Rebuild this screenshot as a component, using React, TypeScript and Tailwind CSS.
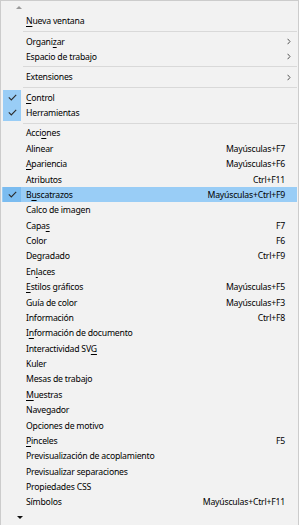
type Item =
  | 'sep'
  | {
      label: string;
      u?: number;
      shortcut?: string;
      sub?: boolean;
      checked?: boolean;
      active?: boolean;
    };

const items: Item[] = [
  { label: 'Nueva ventana', u: 0 },
  'sep',
  { label: 'Organizar', u: 6, sub: true },
  { label: 'Espacio de trabajo', sub: true },
  'sep',
  { label: 'Extensiones', sub: true },
  'sep',
  { label: 'Control', u: 0, checked: true },
  { label: 'Herramientas', checked: true },
  'sep',
  { label: 'Acciones', u: 4 },
  { label: 'Alinear', shortcut: 'Mayúsculas+F7' },
  { label: 'Apariencia', u: 0, shortcut: 'Mayúsculas+F6' },
  { label: 'Atributos', shortcut: 'Ctrl+F11' },
  { label: 'Buscatrazos', u: 1, shortcut: 'Mayúsculas+Ctrl+F9', checked: true, active: true },
  { label: 'Calco de imagen' },
  { label: 'Capas', u: 4, shortcut: 'F7' },
  { label: 'Color', shortcut: 'F6' },
  { label: 'Degradado', shortcut: 'Ctrl+F9' },
  { label: 'Enlaces', u: 2 },
  { label: 'Estilos gráficos', u: 0, shortcut: 'Mayúsculas+F5' },
  { label: 'Guía de color', shortcut: 'Mayúsculas+F3' },
  { label: 'Información', shortcut: 'Ctrl+F8' },
  { label: 'Información de documento', u: 1 },
  { label: 'Interactividad SVG', u: 17 },
  { label: 'Kuler' },
  { label: 'Mesas de trabajo' },
  { label: 'Muestras', u: 0 },
  { label: 'Navegador' },
  { label: 'Opciones de motivo' },
  { label: 'Pinceles', u: 0, shortcut: 'F5' },
  { label: 'Previsualización de acoplamiento' },
  { label: 'Previsualizar separaciones' },
  { label: 'Propiedades CSS' },
  { label: 'Símbolos', shortcut: 'Mayúsculas+Ctrl+F11' },
];

function Label({ text, u }: { text: string; u?: number }) {
  if (u === undefined) return <span>{text}</span>;
  return (
    <span>
      {text.slice(0, u)}
      <span className="underline underline-offset-[1.5px] decoration-[0.5px]">{text[u]}</span>
      {text.slice(u + 1)}
    </span>
  );
}

function Check() {
  return (
    <svg width="9" height="7" viewBox="0 0 9 7" fill="none">
      <path d="M0.8 3.4 L3.3 5.9 L8.2 0.9" stroke="#2b2b2b" strokeWidth="1.1" />
    </svg>
  );
}

function Chevron() {
  return (
    <svg width="4" height="7" viewBox="0 0 4 7" fill="none">
      <path d="M0.6 0.8 L3 3.5 L0.6 6.2" stroke="#555" strokeWidth="1" />
    </svg>
  );
}

export default function App() {
  return (
    <div
      className="w-[299px] h-[525px] overflow-hidden bg-[#f2f2f2] border border-b-0 border-[#cccccc] text-[8.7px] tracking-[-0.22px] text-black"
      style={{ fontFamily: '"Noto Sans", "Open Sans", sans-serif' }}
    >
      <div className="h-[12.3px] pl-[15px] pt-[5px]">
        <div className="w-0 h-0 border-l-[3px] border-r-[3px] border-b-[3px] border-l-transparent border-r-transparent border-b-[#9a9a9a]" />
      </div>
      {items.map((it, i) => {
        if (it === 'sep') {
          return (
            <div key={i} className="h-[5px] flex items-center pl-[22px] pr-[1px]">
              <div className="h-px w-full bg-[#d9d9d9]" />
            </div>
          );
        }
        return (
          <div
            key={i}
            className={
              'h-[15.375px] flex items-center pr-[12px] ml-[1px] mr-[1px] ' +
              (it.active ? 'bg-[#99cdf6]' : '')
            }
          >
            <div
              className={
                'w-[18px] h-full flex items-center justify-center ml-[1px] ' +
                (it.checked ? (it.active ? 'bg-[#7bbcf0]' : 'bg-[#99cdf6]') : '')
              }
            >
              {it.checked && <Check />}
            </div>
            <div className="ml-[5px] pt-[1px] flex-1 whitespace-nowrap leading-none">
              <Label text={it.label} u={it.u} />
            </div>
            {it.shortcut && <div className="pt-[1px] whitespace-nowrap leading-none">{it.shortcut}</div>}
            {it.sub && (
              <div className="mr-[-6px]">
                <Chevron />
              </div>
            )}
          </div>
        );
      })}
      <div className="pl-[16px] pt-[6px]">
        <div className="w-0 h-0 border-l-[3px] border-r-[3px] border-t-[3px] border-l-transparent border-r-transparent border-t-[#111]" />
      </div>
    </div>
  );
}
